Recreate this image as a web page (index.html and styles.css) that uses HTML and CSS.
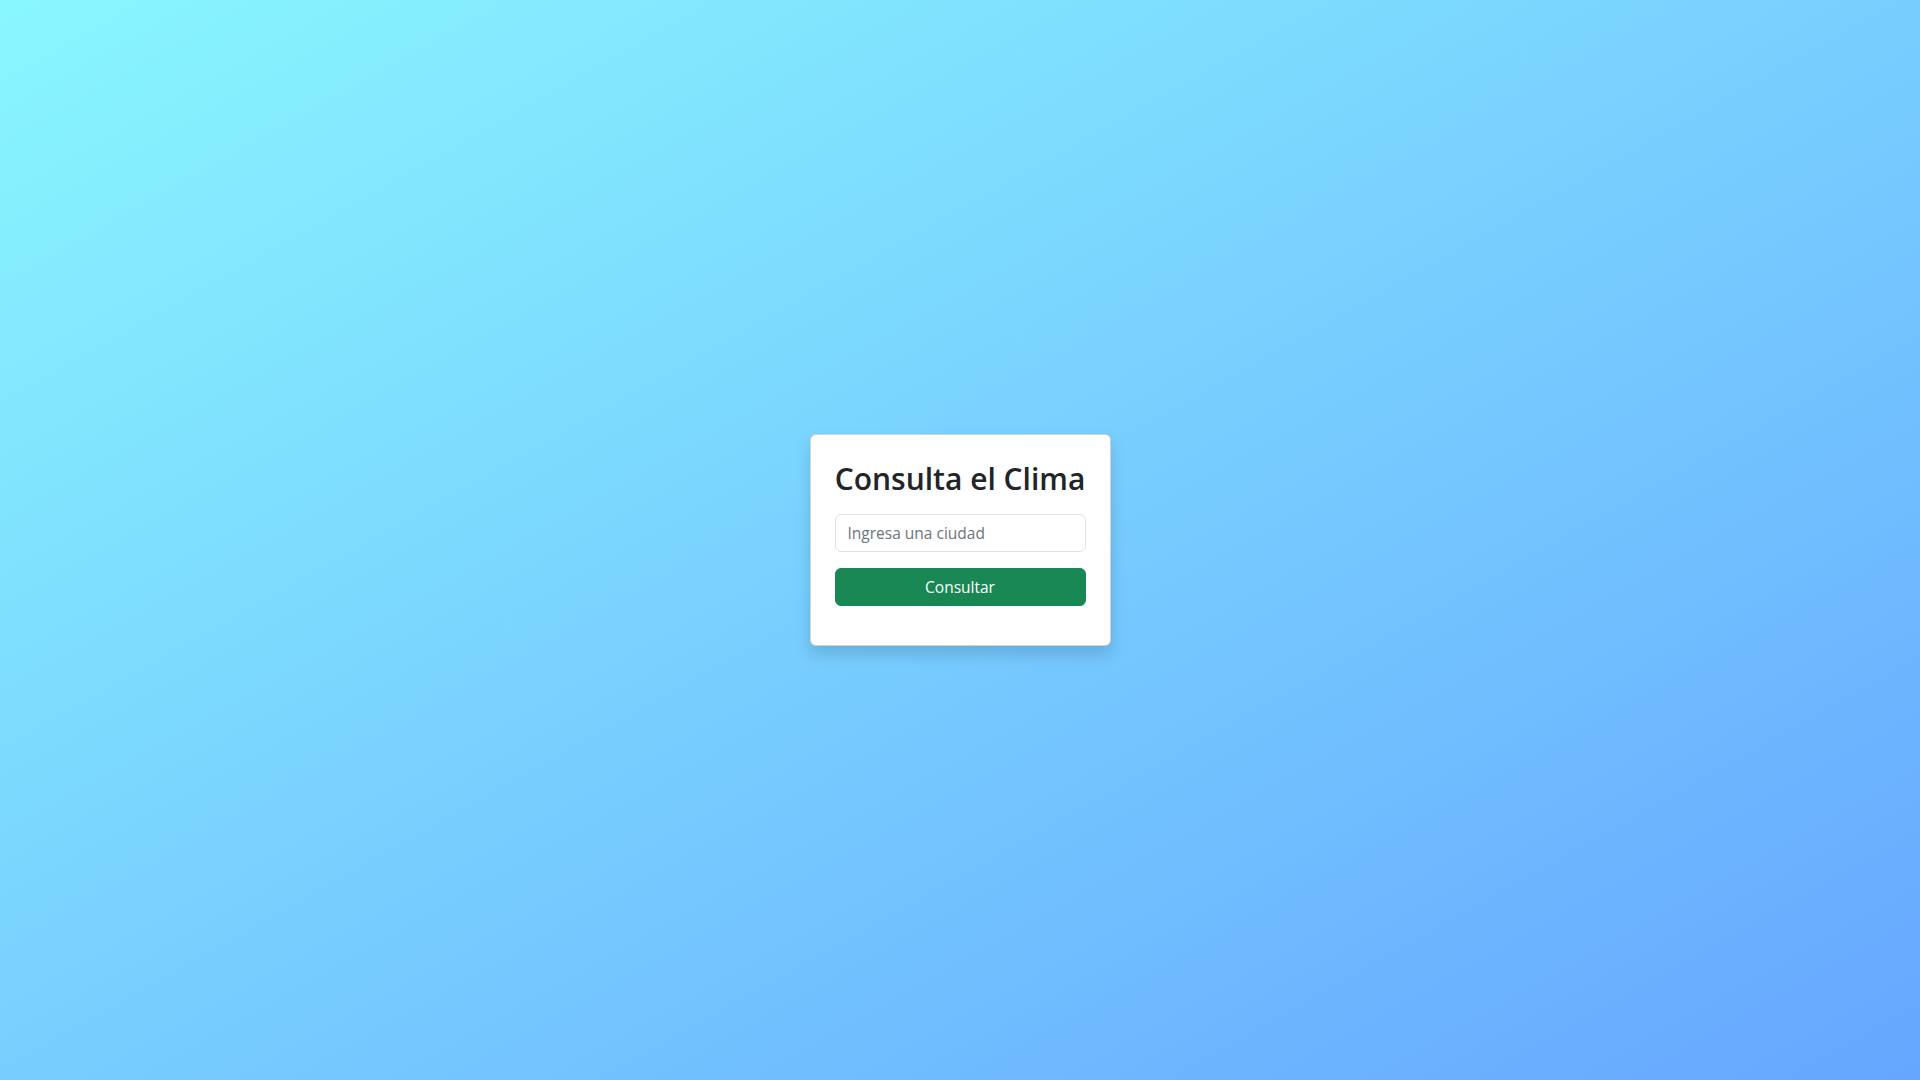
FILE: index.html
```html
<!DOCTYPE html>
<html lang="es">
<head>
<meta charset="utf-8">
<title>Consulta el Clima</title>
<link rel="stylesheet" href="styles.css">
</head>
<body>
<main class="page">
  <div class="card">
    <h2 class="card-title">Consulta el Clima</h2>
    <form class="form">
      <input class="input" type="text" placeholder="Ingresa una ciudad">
      <button class="btn" type="button">Consultar</button>
    </form>
  </div>
</main>
</body>
</html>
```
FILE: styles.css
```css
* { box-sizing: border-box; }
html, body { margin: 0; height: 100%; }
body {
  font-family: "Open Sans", "Noto Sans", "Liberation Sans", sans-serif;
  color: #212529;
  background: linear-gradient(to bottom right, #89f7fe, #66a6ff);
}
.page {
  height: 100vh;
  display: flex;
  align-items: center;
  justify-content: center;
}
.card {
  width: 301px;
  height: 212px;
  background: #fff;
  border: 1px solid rgba(0,0,0,0.175);
  border-radius: 6px;
  padding: 25px 24px 24px;
  box-shadow: 0 8px 16px rgba(0,0,0,0.15);
}
.card-title {
  margin: 0 0 16px;
  font-size: 30px;
  font-weight: 600;
  line-height: 38.4px;
  text-align: center;
  white-space: nowrap;
}
.form { display: flex; flex-direction: column; gap: 16px; }
.input {
  display: block;
  width: 100%;
  height: 38px;
  padding: 6px 12px;
  font: inherit;
  font-size: 15.5px;
  color: #212529;
  border: 1px solid #dee2e6;
  border-radius: 6px;
  outline: none;
}
.input::placeholder { color: #6c757d; }
.btn {
  display: block;
  width: 100%;
  height: 38px;
  font: inherit;
  font-size: 15.5px;
  color: #fff;
  background: #198754;
  border: 1px solid #198754;
  border-radius: 6px;
  cursor: pointer;
}
```
